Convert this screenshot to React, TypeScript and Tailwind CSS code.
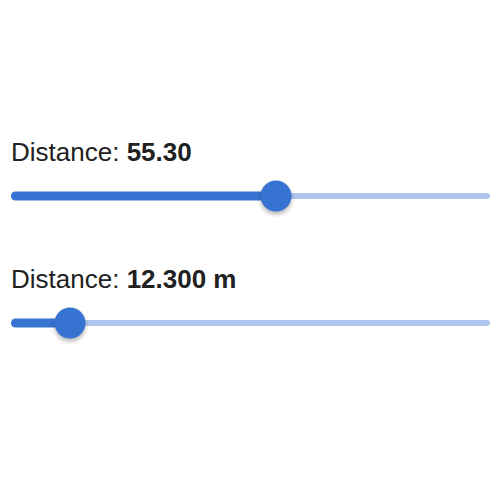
import React from "react";

type SliderProps = {
  label: string;
  value: number;
  display: string;
  min?: number;
  max?: number;
};

function DistanceSlider({ label, value, display, min = 0, max = 100 }: SliderProps) {
  const pct = ((value - min) / (max - min)) * 100;

  return (
    <div className="flex flex-col">
      <p className="text-[26px] leading-[37px] text-[#212121]">
        {label} <span className="font-bold">{display}</span>
      </p>

      {/* slider */}
      <div className="relative mt-2 h-[34px] w-full">
        <div className="absolute left-0 right-0 top-1/2 h-[6px] -translate-y-1/2 rounded-full bg-[#afc7ed]" />
        <div
          className="absolute left-0 top-1/2 h-[9px] -translate-y-1/2 rounded-full bg-[#3774d1]"
          style={{ width: `${pct}%` }}
        />
        <div
          className="absolute top-1/2 h-[31px] w-[31px] -translate-x-1/2 -translate-y-1/2 rounded-full bg-[#3774d1] shadow-[0_3px_4px_rgba(0,0,0,0.28)]"
          style={{ left: `${pct}%` }}
        />
      </div>
    </div>
  );
}

export default function App() {
  return (
    <div
      className="h-[500px] w-[500px] bg-white pl-[11px] pr-[10px] pt-[134px]"
      style={{ fontFamily: '"Liberation Sans", Arial, sans-serif' }}
    >
      <div className="flex flex-col gap-12">
        <DistanceSlider label="Distance:" value={55.3} display="55.30" />
        <DistanceSlider label="Distance:" value={12.3} display="12.300 m" />
      </div>
    </div>
  );
}
